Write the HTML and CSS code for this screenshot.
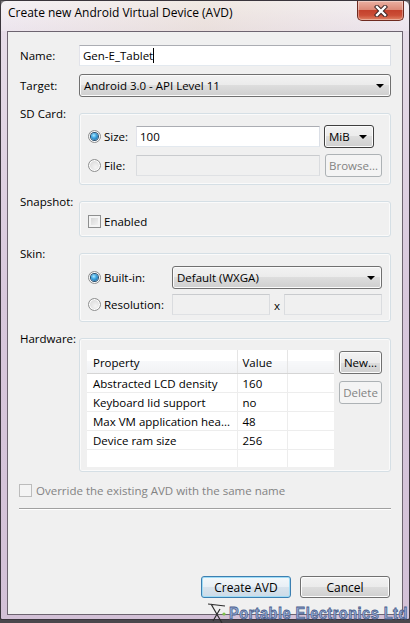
FILE: index.html
```html
<!DOCTYPE html>
<html lang="en">
<head>
    <meta charset="UTF-8">
    <meta name="viewport" content="width=device-width, initial-scale=1.0">
    <title>Create new Android Virtual Device (AVD)</title>
    <link rel="stylesheet" href="styles.css">
</head>
<body>
    <div class="window">
        <div class="titlebar">
            <span class="title">Create new Android Virtual Device (AVD)</span>
            <button class="close" title="Close">
                <svg width="14" height="12" viewBox="0 0 14 12">
                    <path d="M3 2 L11 10 M11 2 L3 10" stroke="#3b2424" stroke-width="4.4" stroke-linecap="square"/>
                    <path d="M3 2 L11 10 M11 2 L3 10" stroke="#fff" stroke-width="2.4" stroke-linecap="square"/>
                </svg>
            </button>
        </div>
        <div class="client">
            <div class="row">
                <label class="lbl">Name:</label>
                <div class="textbox name">Gen-E_Tablet<span class="caret"></span></div>
            </div>
            <div class="row target">
                <label class="lbl">Target:</label>
                <div class="combo wide">Android 3.0 - API Level 11<span class="arrow"></span></div>
            </div>

            <div class="section">
                <div class="lbl">SD Card:</div>
                <div class="group sd">
                    <div class="opt"><span class="radio on"></span>Size:</div>
                    <div class="textbox">100</div>
                    <div class="combo unit">MiB<span class="arrow"></span></div>
                    <div class="opt"><span class="radio"></span>File:</div>
                    <div class="textbox disabled"></div>
                    <button class="btn disabled">Browse...</button>
                </div>
            </div>

            <div class="section">
                <div class="lbl">Snapshot:</div>
                <div class="group snap">
                    <div class="opt"><span class="check"></span>Enabled</div>
                </div>
            </div>

            <div class="section">
                <div class="lbl">Skin:</div>
                <div class="group skin">
                    <div class="opt"><span class="radio on"></span>Built-in:</div>
                    <div class="combo">Default (WXGA)<span class="arrow"></span></div>
                    <div class="opt"><span class="radio"></span>Resolution:</div>
                    <div class="res">
                        <div class="textbox disabled"></div>
                        <span class="times">x</span>
                        <div class="textbox disabled"></div>
                    </div>
                </div>
            </div>

            <div class="section">
                <div class="lbl">Hardware:</div>
                <div class="group hw">
                    <table class="props">
                        <colgroup>
                            <col class="c-prop">
                            <col class="c-val">
                            <col>
                        </colgroup>
                        <thead>
                            <tr><th>Property</th><th>Value</th><th></th></tr>
                        </thead>
                        <tbody>
                            <tr><td>Abstracted LCD density</td><td>160</td><td></td></tr>
                            <tr><td>Keyboard lid support</td><td>no</td><td></td></tr>
                            <tr><td>Max VM application hea...</td><td>48</td><td></td></tr>
                            <tr><td>Device ram size</td><td>256</td><td></td></tr>
                            <tr class="empty"><td></td><td></td><td></td></tr>
                        </tbody>
                    </table>
                    <div class="hw-buttons">
                        <button class="btn">New...</button>
                        <button class="btn disabled">Delete</button>
                    </div>
                </div>
            </div>

            <div class="override"><span class="check disabled"></span>Override the existing AVD with the same name</div>
            <div class="separator"></div>

            <div class="actions">
                <button class="btn big default">Create AVD</button>
                <button class="btn big">Cancel</button>
            </div>
        </div>
    </div>

    <div class="watermark">
        <svg width="20" height="21" viewBox="0 0 20 21">
            <path d="M0 1 L17 3 M3 1 L14 20 M12 6 L5 18" stroke="#2c2c2c" stroke-width="1.2" fill="none"/>
            <circle cx="16" cy="11" r="1.6" fill="#7fc04a"/>
        </svg>
        <span>Portable Electronics Ltd</span>
    </div>
</body>
</html>
```

FILE: styles.css
```css
body {
    margin: 0;
    width: 410px;
    height: 623px;
    background-color: #4a474c;
    font-family: "Open Sans", "Noto Sans", sans-serif;
    font-size: 11.5px;
    color: #000;
    position: relative;
    overflow: hidden;
}
.window {
    box-sizing: border-box;
    width: 410px;
    height: 620px;
    border: 1px solid #3a353c;
    border-radius: 6px 6px 2px 2px;
    padding: 0 6px 4px 6px;
    display: flex;
    flex-direction: column;
    background: linear-gradient(to bottom, #f1ecf1 0, #e6dce8 30px, #d8c8dc 300px, #d3c1d7 100%);
}
.titlebar {
    display: flex;
    align-items: flex-start;
    height: 30px;
    margin: 0 -6px;
    padding: 0 5px 0 7px;
    background: linear-gradient(to right, rgba(255,255,255,0.25), rgba(240,228,200,0.35) 50%, rgba(255,255,255,0.2));
}
.title {
    padding-top: 4px;
    line-height: 16px;
    font-size: 12px;
}
.close {
    margin-left: auto;
    width: 47px;
    height: 20px;
    padding: 0;
    border: 1px solid #6e2a20;
    border-top: none;
    border-radius: 0 0 5px 5px;
    background: linear-gradient(to bottom, #eab0a2 0%, #dc8a78 45%, #c4412c 50%, #cb4d36 75%, #e08466 100%);
    box-shadow: inset 0 0 0 1px rgba(255,255,255,0.35);
    display: flex;
    align-items: center;
    justify-content: center;
}
.client {
    flex: 1;
    box-sizing: border-box;
    border: 1px solid #6d6470;
    background-color: #f0f0f0;
    padding: 13px 11px 16px 12px;
    display: flex;
    flex-direction: column;
}
.row {
    display: flex;
    align-items: center;
}
.row.target {
    margin-top: 8px;
}
.lbl {
    width: 59px;
    flex-shrink: 0;
    line-height: 15px;
}
.textbox {
    box-sizing: border-box;
    height: 21px;
    line-height: 19px;
    padding-left: 3px;
    background-color: #fff;
    border: 1px solid;
    border-color: #abadb3 #dbdfe6 #e3e9ef #e2e3ea;
}
.textbox.name {
    width: 313px;
}
.textbox.disabled {
    background-color: #f0f0f0;
    border-color: #c9cbce #dadcdf #dfe1e4 #dadcdf;
}
.caret {
    display: inline-block;
    width: 1px;
    height: 15px;
    background-color: #000;
    vertical-align: -3px;
}
.combo {
    position: relative;
    box-sizing: border-box;
    height: 23px;
    line-height: 21px;
    padding-left: 4px;
    border: 1px solid #707070;
    border-radius: 3px;
    background: linear-gradient(to bottom, #f2f2f2 0%, #ebebeb 50%, #dddddd 50%, #cfcfcf 100%);
    box-shadow: inset 0 0 0 1px #fbfbfb;
}
.combo.wide {
    width: 313px;
}
.combo.unit {
    width: 50px;
    justify-self: start;
    border-color: #3f3f3f;
    margin-left: -1px;
}
.arrow {
    position: absolute;
    right: 6px;
    top: 9px;
    width: 0;
    height: 0;
    border-left: 4px solid transparent;
    border-right: 4px solid transparent;
    border-top: 4px solid #000;
}
.section {
    display: flex;
    align-items: flex-start;
    margin-top: 9px;
}
.group {
    box-sizing: border-box;
    width: 312px;
    margin-top: 7px;
    border: 1px solid #d5dfe5;
    border-radius: 3px;
    box-shadow: inset 0 0 0 1px #fafafa;
}
.group.sd {
    display: grid;
    grid-template-columns: 43px 184px 57px;
    grid-auto-rows: 23px;
    column-gap: 5px;
    row-gap: 6px;
    align-items: center;
    padding: 11px 8px 7px 8px;
}
.group.snap {
    height: 36px;
    padding: 12px 8px 0 8px;
}
.group.skin {
    display: grid;
    grid-template-columns: 79px 210px;
    grid-auto-rows: 23px;
    column-gap: 5px;
    row-gap: 4px;
    align-items: center;
    padding: 12px 8px 5px 8px;
}
.res {
    display: flex;
    align-items: center;
    justify-content: space-between;
}
.res .textbox {
    width: 98px;
}
.times {
    line-height: 15px;
    padding-top: 2px;
}
.opt {
    display: flex;
    align-items: center;
    line-height: 15px;
    white-space: nowrap;
}
.radio {
    box-sizing: border-box;
    width: 13px;
    height: 13px;
    margin-right: 3px;
    border: 1px solid #8e8f8f;
    border-radius: 50%;
    background: radial-gradient(circle at 60% 65%, #f4f4f4 0, #dcdcdc 70%);
    box-shadow: inset 0 0 0 1px #fff;
    display: inline-flex;
    align-items: center;
    justify-content: center;
}
.radio.on::after {
    content: "";
    width: 7px;
    height: 7px;
    border-radius: 50%;
    background: radial-gradient(circle at 40% 35%, #aeeaff 0, #3ea6e2 40%, #17598e 100%);
    box-shadow: 0 0 0 1px #2a4f6e;
}
.check {
    box-sizing: border-box;
    width: 13px;
    height: 13px;
    margin-right: 3px;
    border: 1px solid #8e8f8f;
    background: linear-gradient(135deg, #d0d0d0 0, #f8f8f8 100%);
    box-shadow: inset 0 0 0 2px #f4f4f4;
    display: inline-block;
}
.check.disabled {
    border-color: #bcbcbc;
    background: #f4f4f4;
    box-shadow: none;
}
.btn {
    box-sizing: border-box;
    height: 23px;
    padding: 0 3px;
    font-family: inherit;
    font-size: 11.5px;
    color: #000;
    border: 1px solid #707070;
    border-radius: 3px;
    background: linear-gradient(to bottom, #f2f2f2 0%, #ebebeb 50%, #dddddd 50%, #cfcfcf 100%);
    box-shadow: inset 0 0 0 1px #fcfcfc;
}
.btn.disabled {
    color: #838383;
    border-color: #adb2b5;
    background: #f4f4f4;
    box-shadow: none;
}
.group.hw {
    display: flex;
    gap: 5px;
    padding: 11px 8px 4px 7px;
}
.props {
    width: 247px;
    height: 117px;
    border-collapse: collapse;
    table-layout: fixed;
    background-color: #fff;
}
.c-prop {
    width: 150px;
}
.c-val {
    width: 50px;
}
.props th {
    box-sizing: border-box;
    height: 23px;
    padding: 2px 6px 0 6px;
    font-weight: normal;
    text-align: left;
    background: linear-gradient(to bottom, #ffffff 0%, #ffffff 50%, #f7f8fa 50%, #f1f2f4 100%);
    border-right: 1px solid #e5e5e5;
    border-bottom: 1px solid #d5d5d5;
}
.props td {
    box-sizing: border-box;
    height: 19px;
    padding: 2px 6px 0 6px;
    line-height: 15px;
    white-space: nowrap;
    overflow: hidden;
    border-right: 1px solid #ededed;
    border-bottom: 1px solid #ededed;
}
.props th:last-child, .props td:last-child {
    border-right: none;
}
.props td:nth-child(2), .props th:nth-child(2) {
    padding-left: 5px;
}
.props tr.empty td {
    height: auto;
    border-bottom: none;
}
.hw-buttons {
    display: flex;
    flex-direction: column;
    gap: 7px;
    padding-top: 1px;
}
.hw-buttons .btn {
    width: 43px;
}
.override {
    display: flex;
    align-items: center;
    margin-top: 11px;
    margin-left: -1px;
    line-height: 15px;
    color: #838383;
}
.override .check {
    margin-right: 4px;
}
.separator {
    margin-top: 10px;
    margin-left: -1px;
    width: 372px;
    border-top: 1px solid #a0a0a0;
    border-bottom: 1px solid #ffffff;
    box-sizing: border-box;
    height: 2px;
}
.actions {
    margin-top: auto;
    display: flex;
    justify-content: flex-end;
    gap: 9px;
    padding-right: 1px;
}
.btn.big {
    width: 90px;
    height: 22px;
    font-size: 12px;
}
.btn.default {
    border-color: #3c7fb1;
    background: linear-gradient(to bottom, #f3f8fb 0%, #e8eff5 50%, #d8e3ec 50%, #cddbe7 100%);
    box-shadow: inset 0 0 0 1px #9fdcf6;
}
.watermark {
    position: absolute;
    left: 208px;
    top: 603px;
    display: flex;
    align-items: flex-end;
    gap: 1px;
    white-space: nowrap;
}
.watermark svg {
    flex-shrink: 0;
}
.watermark span {
    display: inline-block;
    font-family: "Liberation Sans", sans-serif;
    font-weight: bold;
    font-size: 14.5px;
    line-height: 18px;
    color: #93aad6;
    -webkit-text-stroke: 0.7px #4b5f8c;
    letter-spacing: 0.5px;
    transform: scaleY(1.15);
    transform-origin: left bottom;
}
```
